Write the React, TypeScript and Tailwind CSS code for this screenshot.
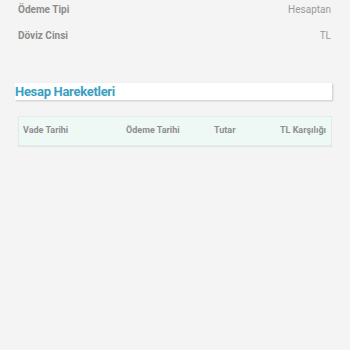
import React from 'react';

const rows = [
    { label: 'Ödeme Tipi', value: 'Hesaptan' },
    { label: 'Döviz Cinsi', value: 'TL' },
];

export default function App() {
    return (
        <div className="w-[350px] h-[350px] bg-[#f4f4f4] overflow-hidden" style={{ fontFamily: 'Roboto, "Liberation Sans", sans-serif' }}>
            {/* detail rows */}
            <div className="pl-[18px] pr-[19px] -mt-[4px]">
                {rows.map((r) => (
                    <div key={r.label} className="flex justify-between items-center h-[26px] text-[10px]">
                        <span className="font-bold text-[#8c8c8c]">{r.label}</span>
                        <span className="text-[#9a9a9a]">{r.value}</span>
                    </div>
                ))}
            </div>

            {/* section header */}
            <div className="ml-[15px] mr-[18px] mt-[35px] h-[17px] bg-white shadow-[1px_1px_2px_rgba(0,0,0,0.18)] flex items-center">
                <span className="text-[13px] font-bold text-[#3b9fc1] leading-none tracking-[-0.3px]">Hesap Hareketleri</span>
            </div>

            {/* table header */}
            <div className="ml-[18px] mr-[18px] mt-[16px] h-[30px] bg-[#eef8f5] border border-[#e3ebe8] shadow-[0_1px_1px_rgba(0,0,0,0.06)] grid grid-cols-[103px_88px_60px_1fr] items-center pl-[4px] pr-[5px] text-[9px] font-bold text-[#8f8f8f]">
                <span>Vade Tarihi</span>
                <span>Ödeme Tarihi</span>
                <span>Tutar</span>
                <span className="text-right">TL Karşılığı</span>
            </div>
        </div>
    );
}
